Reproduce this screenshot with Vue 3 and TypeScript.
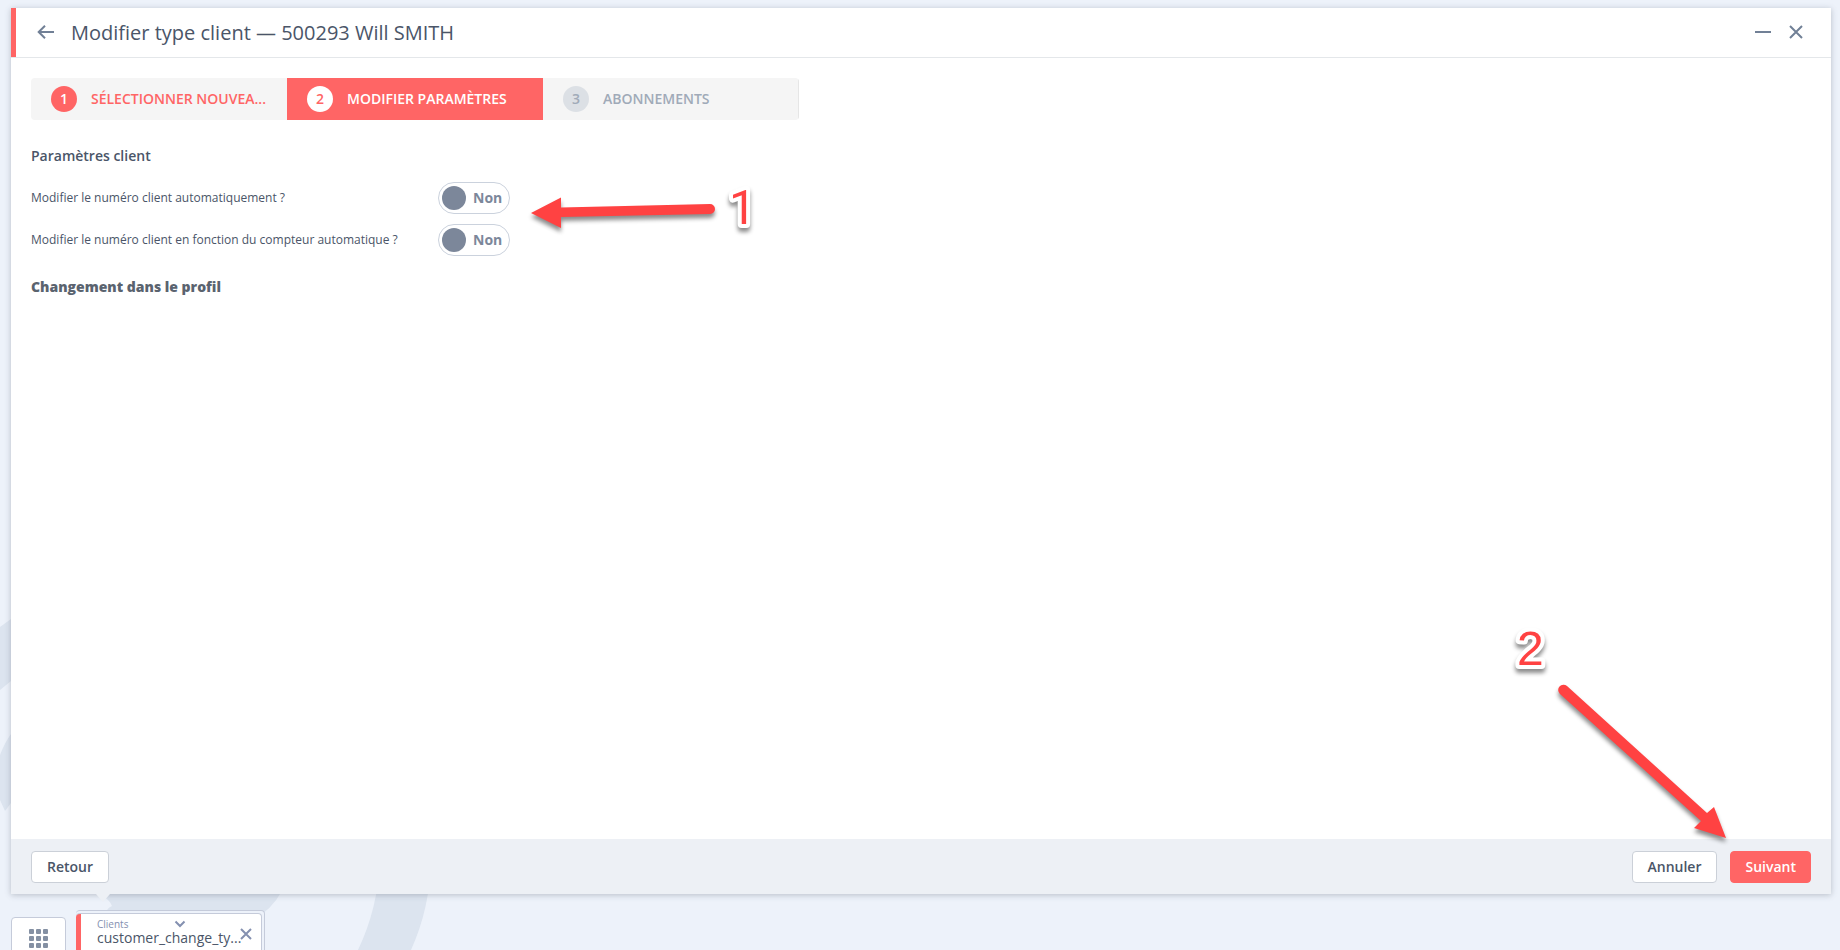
<script setup lang="ts">
import { ref } from 'vue'

interface Step {
  id: number
  label: string
  state: 'done' | 'current' | 'todo'
}

interface Option {
  id: string
  label: string
}

const steps: Step[] = [
  { id: 1, label: 'Sélectionner nouvea...', state: 'done' },
  { id: 2, label: 'Modifier paramètres', state: 'current' },
  { id: 3, label: 'Abonnements', state: 'todo' },
]

const options: Option[] = [
  { id: 'auto-number', label: 'Modifier le numéro client automatiquement ?' },
  { id: 'auto-counter', label: 'Modifier le numéro client en fonction du compteur automatique ?' },
]

const values = ref<Record<string, boolean>>({ 'auto-number': false, 'auto-counter': false })
</script>

<template>
  <div class="desktop">
    <svg class="backdrop" width="440" height="340" viewBox="0 0 440 340" aria-hidden="true">
      <path d="M0 17 L11 9 L60 9 V71 H11 L0 80Z M0 145 Q5 132 11 124 H60 V193 H11 L5 201 L0 190Z" />
      <path d="M100 270 H287 Q278 293 261 305 H108 Q104 300 112 296 Q110 290 100 284Z" />
      <path d="M380 250 H431 Q430 298 411 340 H358 Q378 298 380 250Z" />
    </svg>

    <main class="window">
      <header class="window-head">
        <button class="icon-button" type="button" aria-label="Précédent">
          <svg width="18" height="16" viewBox="0 0 18 16"><path d="M17 7H2M8 0.800L1.700 7L8 13.200" /></svg>
        </button>
        <h1>Modifier type client — 500293 Will SMITH</h1>
        <div class="window-tools">
          <button class="icon-button" type="button" aria-label="Réduire">
            <svg width="18" height="16" viewBox="0 0 18 16"><path d="M1 7H17" /></svg>
          </button>
          <button class="icon-button" type="button" aria-label="Fermer">
            <svg width="16" height="16" viewBox="0 0 16 16"><path d="M2 1L14 13M14 1L2 13" /></svg>
          </button>
        </div>
      </header>

      <section class="window-body">
        <ol class="steps">
          <li v-for="step in steps" :key="step.id" class="step" :class="step.state">
            <span class="step-number">{{ step.id }}</span>
            <span class="step-label">{{ step.label }}</span>
          </li>
        </ol>

        <h2 class="group-title">Paramètres client</h2>
        <div v-for="option in options" :key="option.id" class="option">
          <label :for="option.id">{{ option.label }}</label>
          <span class="toggle">
            <input :id="option.id" v-model="values[option.id]" type="checkbox" />
            <span class="toggle-text">{{ values[option.id] ? 'Oui' : 'Non' }}</span>
          </span>
        </div>
        <h2 class="group-title strong">Changement dans le profil</h2>
      </section>

      <footer class="window-foot">
        <button class="button" type="button">Retour</button>
        <div class="actions">
          <button class="button" type="button">Annuler</button>
          <button class="button primary" type="button">Suivant</button>
        </div>
      </footer>
      <svg class="notch" width="14" height="8" viewBox="0 0 14 8" aria-hidden="true"><path d="M0 0H14L7 8Z" /></svg>

      <svg class="note note-one" width="240" height="70" viewBox="0 0 240 70" aria-hidden="true">
        <path class="arrow" d="M11 33L41 17.500V27.500L190 24A5 5 0 0 1 190 34L41 37V48Z" />
        <text x="209" y="44">1</text>
      </svg>
      <svg class="note note-two" width="230" height="230" viewBox="0 0 230 230" aria-hidden="true">
        <path class="arrow" d="M215 218L183 208L190 201L49 74A5 5 0 0 1 56 66L196 193L203 187Z" />
        <text x="6" y="45">2</text>
      </svg>
    </main>

    <nav class="taskbar" aria-label="Fenêtres ouvertes">
      <button class="launcher" type="button" aria-label="Applications">
        <svg width="20" height="20" viewBox="0 0 20 20">
          <template v-for="row in 3" :key="row">
            <rect v-for="col in 3" :key="col" :x="(col - 1) * 7" :y="(row - 1) * 7" width="5" height="5" rx="1" />
          </template>
        </svg>
      </button>
      <div class="task-stack">
        <div class="task">
          <div class="task-text">
            <span class="task-group">Clients</span>
            <a class="task-name" href="#">customer_change_ty...</a>
          </div>
          <button class="task-more" type="button" aria-label="Afficher la liste">
            <svg width="12" height="8" viewBox="0 0 12 8"><path d="M1.500 1.500L6 6L10.500 1.500" /></svg>
          </button>
          <button class="task-close" type="button" aria-label="Fermer la tâche">
            <svg width="12" height="12" viewBox="0 0 12 12"><path d="M1 1L11 11M11 1L1 11" /></svg>
          </button>
        </div>
      </div>
    </nav>
  </div>
</template>

<style>
html,
body {
  margin: 0;
  background: #edf2fa;
}
</style>

<style scoped>
* {
  box-sizing: border-box;
}

.desktop {
  position: relative;
  display: flex;
  flex-direction: column;
  height: 100vh;
  padding: 8px 9px 0 11px;
  overflow: hidden;
  color: #4a5568;
  font-family: "Open Sans", "Noto Sans", sans-serif;
  font-size: 14px;
  line-height: 20px;
}

button {
  padding: 0;
  border: 0;
  background: none;
  color: inherit;
  font: inherit;
  cursor: pointer;
}

svg {
  display: block;
}

.backdrop {
  position: absolute;
  left: 0;
  bottom: 0;
  fill: #dce4ef;
}

.window {
  position: relative;
  display: flex;
  flex: 1;
  flex-direction: column;
  min-height: 0;
  background: #fff;
  box-shadow: 0 1px 6px rgba(70, 80, 95, 0.32);
}

.window-head {
  display: flex;
  align-items: center;
  height: 50px;
  padding: 0 27px 0 21px;
  border-bottom: 1px solid #e4e7ea;
  background: linear-gradient(#ff6565, #ff6565) left / 5px 100% no-repeat;
}

.icon-button svg {
  fill: none;
  stroke: #718096;
  stroke-width: 2;
}

h1 {
  flex: 1;
  margin: 0 0 0 16px;
  font-size: 20px;
  font-weight: 400;
  line-height: 28px;
}

.window-head > .icon-button {
  margin-left: 5px;
}

.window-tools {
  display: flex;
  gap: 16px;
}

.window-body {
  flex: 1;
  min-height: 0;
  padding: 20px;
}

.steps {
  display: grid;
  grid-template-columns: repeat(3, 1fr);
  width: 100%;
  max-width: 768px;
  margin: 0 0 26px;
  padding: 0;
  overflow: hidden;
  border-radius: 4px;
  list-style: none;
}

.step {
  display: flex;
  align-items: center;
  gap: 14px;
  height: 42px;
  padding: 0 20px;
  background: #f5f5f5;
  color: #a0aab8;
  font-weight: 600;
  text-transform: uppercase;
  white-space: nowrap;
}

.step:last-child {
  border-right: 1px solid #e6e6e6;
}

.step-number {
  flex: none;
  width: 26px;
  border-radius: 50%;
  background: #dce0e5;
  line-height: 26px;
  text-align: center;
}

.done {
  color: #ff6565;
}

.done .step-number {
  background: #ff6565;
  color: #fff;
}

.current {
  background: #ff6565;
  color: #fff;
}

.current .step-number {
  background: #fff;
  color: #ff6565;
}

.group-title {
  margin: 0 0 16px;
  font-size: 14px;
  font-weight: 600;
  line-height: 20px;
}

.strong {
  margin-top: 21px;
  color: #5a636f;
  font-weight: 800;
}

.option {
  display: flex;
  align-items: center;
  margin-bottom: 10px;
}

.option label {
  width: 407px;
  font-size: 12px;
}

.toggle {
  display: flex;
  align-items: center;
  gap: 7px;
  width: 72px;
  height: 32px;
  padding: 0 3px;
  border: 1px solid #cbd2dd;
  border-radius: 16px;
  color: #7c879a;
  font-weight: 700;
}

.toggle input {
  flex: none;
  width: 24px;
  height: 24px;
  margin: 0;
  border-radius: 50%;
  background: #7c879a;
  appearance: none;
  cursor: pointer;
}

.window-foot {
  display: flex;
  align-items: center;
  justify-content: space-between;
  height: 55px;
  padding: 0 20px;
  background: #edf0f5;
}

.actions {
  display: flex;
  gap: 13px;
}

.button {
  height: 32px;
  padding: 0 15px;
  border: 1px solid #cbd0d8;
  border-radius: 4px;
  background: #fff;
  font-weight: 600;
}

.primary {
  padding: 0 14px;
  border-color: #ff6565;
  background: #ff6565;
  color: #fff;
}

.notch {
  position: absolute;
  top: 100%;
  left: 85px;
  fill: #edf0f5;
}

.note {
  position: absolute;
  overflow: visible;
  filter: drop-shadow(0 4px 2px rgba(0, 0, 0, 0.45));
  pointer-events: none;
}

.note-one {
  top: 172px;
  left: 509px;
}

.note-two {
  right: 90px;
  bottom: 44px;
}

.arrow {
  fill: #ff4242;
}

.note text {
  fill: #ff4242;
  stroke: #fff;
  stroke-linejoin: round;
  stroke-width: 8px;
  paint-order: stroke;
  font-family: Roboto, "Liberation Sans", sans-serif;
  font-size: 48px;
}

.note-two text {
  font-family: "Liberation Sans", Arial, sans-serif;
}

.taskbar {
  position: relative;
  display: flex;
  flex: none;
  gap: 10px;
  height: 40px;
  margin-top: 16px;
}

.launcher {
  display: flex;
  justify-content: center;
  width: 55px;
  height: 56px;
  margin-top: 7px;
  padding-top: 11px;
  border: 1px solid #c5cbda;
  border-radius: 4px;
  background: #fff;
}

.launcher svg {
  fill: #8490a3;
}

.task-stack {
  width: 189px;
  height: 60px;
  padding: 2px 2px 0 0;
  border: 1px solid #c5cbda;
  border-left: 0;
  border-radius: 4px;
  background: #edf2fa;
}

.task {
  position: relative;
  height: 60px;
  padding: 3px 18px 0 21px;
  border: 1px solid #c5cbda;
  border-left: 0;
  border-radius: 4px;
  background: linear-gradient(#ff6565, #ff6565) left / 5px 100% no-repeat, #fff;
}

.task-group,
.task-name {
  display: block;
  white-space: nowrap;
}

.task-group {
  color: #8490b0;
  font-size: 10px;
  line-height: 14px;
}

.task-name {
  color: #4a5568;
  line-height: 14px;
  text-decoration: none;
}

.task-more,
.task-close {
  position: absolute;
}

.task-more {
  top: 6px;
  left: 98px;
}

.task-close {
  top: 14px;
  right: 9px;
}

.task svg {
  fill: none;
  stroke: #8490b0;
  stroke-width: 2;
}
</style>
